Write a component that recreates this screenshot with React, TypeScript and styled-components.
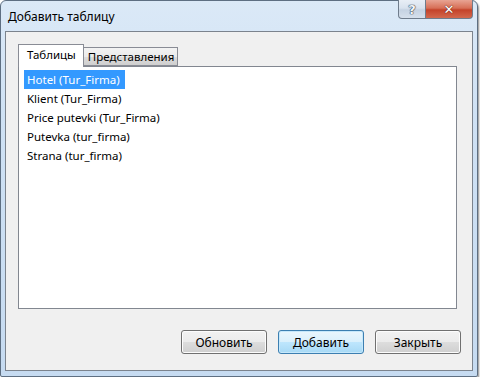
import { useState } from "react";
import styled, { createGlobalStyle, css } from "styled-components";

const GlobalStyle = createGlobalStyle`
    html, body {
        margin: 0;
        padding: 0;
        background: #ffffff;
    }
    body {
        font-family: "Noto Sans", "Liberation Sans", sans-serif;
        font-size: 11.5px;
        color: #000000;
    }
`;

const Window = styled.div`
    width: 478px;
    height: 377px;
    box-sizing: border-box;
    display: flex;
    flex-direction: column;
    padding: 0 4px 5px 4px;
    border: 1px solid #5e6f82;
    border-radius: 6px 6px 2px 2px;
    background: linear-gradient(180deg, #dbe9f7 0%, #cfe1f4 30%, #c6dbf1 100%);
    box-shadow: 1px 2px 2px rgba(0, 0, 0, 0.45);
`;

const TitleBar = styled.div`
    height: 30px;
    display: flex;
    align-items: flex-start;
    justify-content: space-between;
`;

const Title = styled.div`
    padding: 8px 0 0 3px;
    font-size: 12px;
    line-height: 16px;
`;

const CaptionButtons = styled.div`
    display: flex;
    margin-top: -1px;
`;

const CaptionButton = styled.div<{ $close?: boolean }>`
    height: 19px;
    box-sizing: border-box;
    display: flex;
    align-items: center;
    justify-content: center;
    border: 1px solid #6f7c8c;
    border-top: none;
    font-family: "DejaVu Sans", sans-serif;
    font-weight: bold;
    font-size: 13px;
    ${({ $close }) =>
        $close
            ? css`
                  width: 47px;
                  border-radius: 0 0 4px 0;
                  border-left: none;
                  color: #ffffff;
                  background: linear-gradient(180deg, #e8a493 0%, #d76f57 45%, #c4432a 55%, #d3684d 100%);
                  text-shadow: 0 0 1px #5a1a10, 0 0 1px #5a1a10;
              `
            : css`
                  width: 28px;
                  border-radius: 0 0 0 4px;
                  color: #f4f6f9;
                  background: linear-gradient(180deg, #e8eef6 0%, #d8e2ee 45%, #c5d2e2 55%, #d6e0ec 100%);
                  text-shadow: 0 0 1px #2b3a4c, 0 0 1px #2b3a4c, 0 0 1px #2b3a4c;
              `}
`;

const Client = styled.div`
    flex: 1;
    display: flex;
    flex-direction: column;
    background: #f0f0f0;
    border: 1px solid #7b838d;
    padding: 12px 11px 0 12px;
`;

const TabStrip = styled.div`
    display: flex;
    align-items: flex-end;
    height: 22px;
    position: relative;
    z-index: 1;
`;

const Tab = styled.div<{ $active?: boolean }>`
    box-sizing: border-box;
    border: 1px solid #898c95;
    white-space: nowrap;
    ${({ $active }) =>
        $active
            ? css`
                  height: 23px;
                  line-height: 20px;
                  background: #ffffff;
                  border-bottom: none;
                  margin-bottom: -1px;
                  padding: 0 7px 0 8px;
              `
            : css`
                  height: 19px;
                  line-height: 17px;
                  background: linear-gradient(180deg, #f3f3f3 0%, #ebebeb 50%, #dddddd 51%, #cfcfcf 100%);
                  border-left: none;
                  padding: 0 3px 0 4px;
              `}
`;

const Pane = styled.div`
    width: 439px;
    height: 243px;
    box-sizing: border-box;
    border: 1px solid #828790;
    background: #ffffff;
    padding: 3px 0 0 5px;
`;

const ListItem = styled.div<{ $selected?: boolean }>`
    display: table;
    height: 19px;
    line-height: 19px;
    padding: 0 5px 0 3px;
    ${({ $selected }) =>
        $selected &&
        css`
            background: #3399ff;
            color: #ffffff;
        `}
`;

const ButtonRow = styled.div`
    display: flex;
    justify-content: flex-end;
    gap: 11px;
    margin-top: 21px;
`;

const Button = styled.button<{ $default?: boolean }>`
    width: 86px;
    height: 24px;
    box-sizing: border-box;
    font-family: inherit;
    font-size: 12px;
    color: #000000;
    border-radius: 3px;
    padding: 0;
    border: 1px solid #707070;
    background: linear-gradient(180deg, #f2f2f2 0%, #ebebeb 50%, #dddddd 51%, #cfcfcf 100%);
    box-shadow: inset 0 0 0 1px #fcfcfc;
    ${({ $default }) =>
        $default &&
        css`
            border-color: #3c7fb1;
            background: linear-gradient(180deg, #eaf6fd 0%, #d9f0fc 50%, #bee6fd 51%, #a7d9f5 100%);
            box-shadow: inset 0 0 0 1px #c6e8fb;
        `}
`;

const items = [
    "Hotel (Tur_Firma)",
    "Klient (Tur_Firma)",
    "Price putevki (Tur_Firma)",
    "Putevka (tur_firma)",
    "Strana (tur_firma)",
];

const App = () => {
    const [selected, setSelected] = useState(0);

    return (
        <>
            <GlobalStyle />
            <Window>
                <TitleBar>
                    <Title>Добавить таблицу</Title>
                    <CaptionButtons>
                        <CaptionButton>?</CaptionButton>
                        <CaptionButton $close>✕</CaptionButton>
                    </CaptionButtons>
                </TitleBar>
                <Client>
                    <TabStrip>
                        <Tab $active>Таблицы</Tab>
                        <Tab>Представления</Tab>
                    </TabStrip>
                    <Pane>
                        {items.map((item, i) => (
                            <ListItem
                                key={item}
                                $selected={i === selected}
                                onClick={() => setSelected(i)}
                            >
                                {item}
                            </ListItem>
                        ))}
                    </Pane>
                    <ButtonRow>
                        <Button>Обновить</Button>
                        <Button $default>Добавить</Button>
                        <Button>Закрыть</Button>
                    </ButtonRow>
                </Client>
            </Window>
        </>
    );
};

export default App;
